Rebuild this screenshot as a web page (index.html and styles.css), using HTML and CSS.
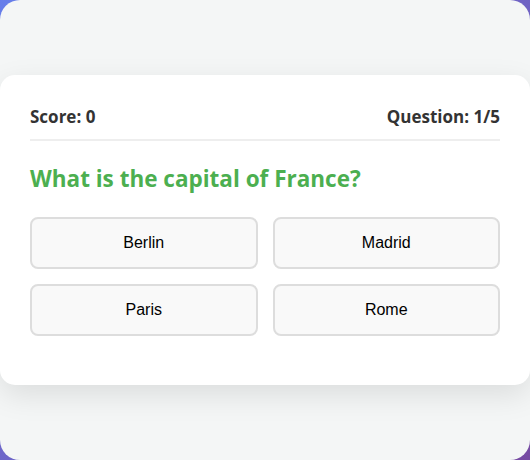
FILE: index.html
```html
<!DOCTYPE html>
<html>
<head>
<meta charset="utf-8">
<link rel="stylesheet" href="styles.css">
</head>
<body>
<div class="app">
  <div class="card">
    <div class="header">
      <span>Score: 0</span>
      <span>Question: 1/5</span>
    </div>
    <h2 class="question">What is the capital of France?</h2>
    <div class="options">
      <button class="option">Berlin</button>
      <button class="option">Madrid</button>
      <button class="option">Paris</button>
      <button class="option">Rome</button>
    </div>
  </div>
</div>
</body>
</html>
```
FILE: styles.css
```css
html, body {
  margin: 0;
  height: 100%;
}
body {
  background: linear-gradient(135deg, #667eea 0%, #764ba2 100%);
  font-family: "Open Sans", "Noto Sans", sans-serif;
}
.app {
  height: 100%;
  background: #f4f6f6;
  border-radius: 20px;
  display: flex;
  align-items: center;
  justify-content: center;
}
.card {
  width: 100%;
  box-sizing: border-box;
  background: #fff;
  border-radius: 15px;
  padding: 30px 30px 49px;
  box-shadow: 0 10px 30px rgba(0, 0, 0, 0.1);
}
.header {
  display: flex;
  justify-content: space-between;
  font-weight: bold;
  font-size: 17px;
  line-height: 24px;
  color: #333;
  padding-bottom: 10px;
  border-bottom: 2px solid #eee;
  margin-bottom: 20px;
}
.question {
  margin: 0 0 20px;
  color: #4caf50;
  font-size: 22.5px;
  line-height: 36px;
  font-weight: bold;
}
.options {
  display: grid;
  grid-template-columns: 1fr 1fr;
  gap: 15px;
}
.option {
  font-family: "Liberation Sans", Arial, sans-serif;
  font-size: 16px;
  color: #000;
  background: #f9f9f9;
  border: 2px solid #ddd;
  border-radius: 8px;
  padding: 15px;
  line-height: 18px;
}
```
